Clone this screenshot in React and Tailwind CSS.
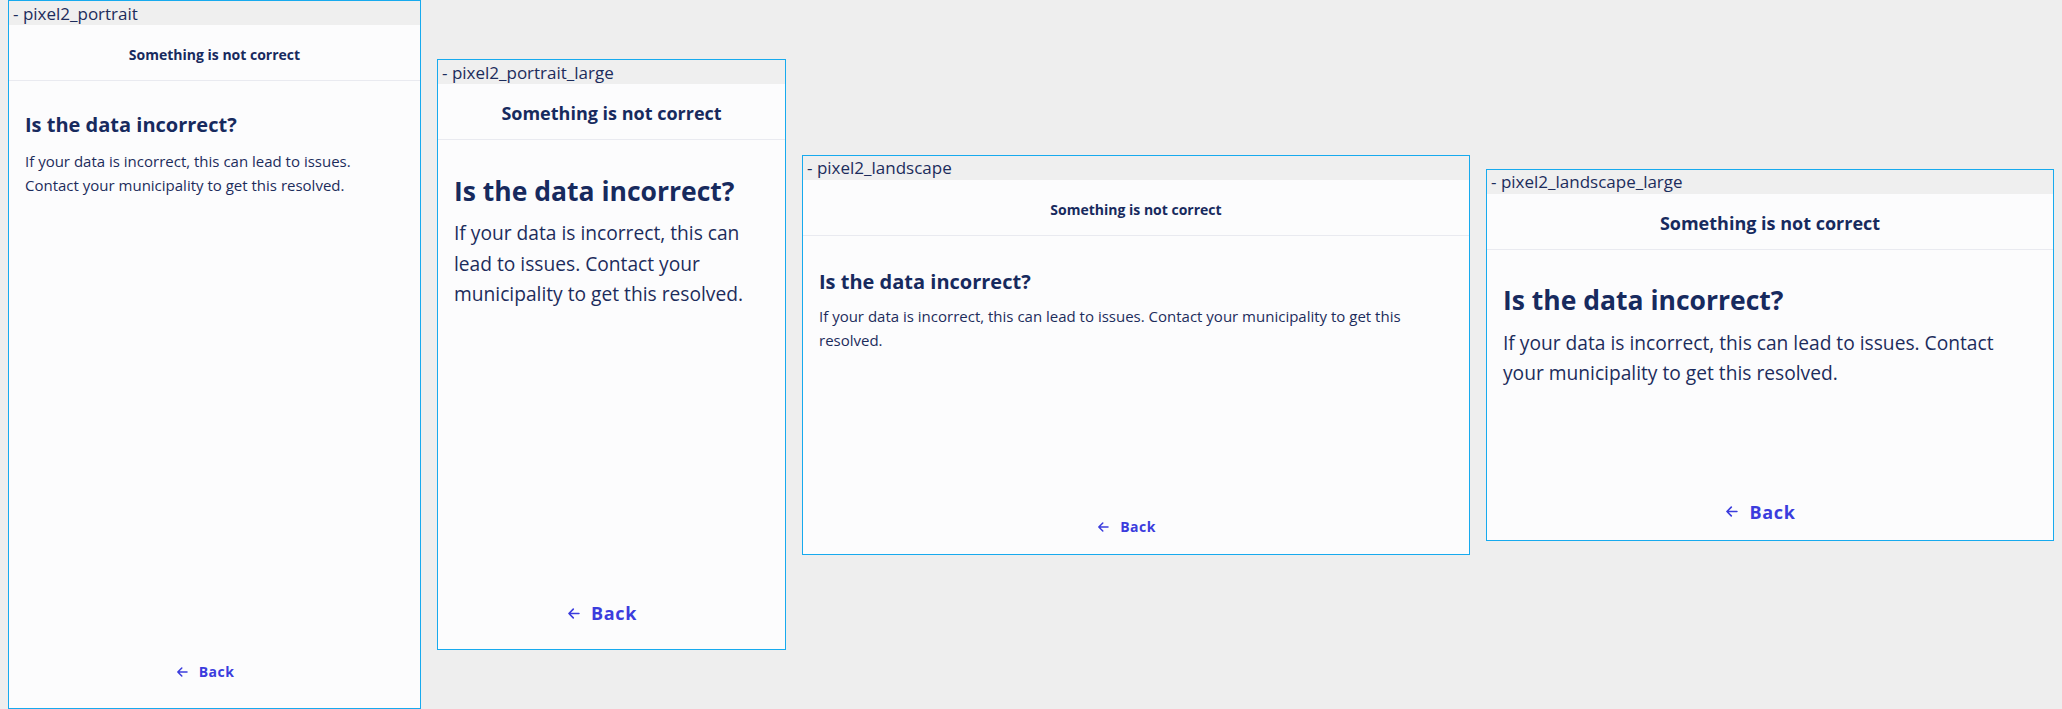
import React from 'react';

const frames = [
  {
    name: 'pixel2_portrait',
    box: 'w-[413px] h-[709px]',
    title: 'text-[14px]',
    content: 'pt-[30px] pb-[26px]',
    heading: 'text-[20px] leading-[28px]',
    body: 'mt-[10px] text-[15px] leading-[24px]',
    back: 'text-[14px] leading-[20px] tracking-[0.5px]',
    arrow: 'w-[12px] h-[12px]',
  },
  {
    name: 'pixel2_portrait_large',
    box: 'w-[349px] h-[591px]',
    title: 'text-[18px]',
    content: 'pt-[33px] pb-[24px]',
    heading: 'text-[26.5px] leading-[36px]',
    body: 'mt-[9px] text-[19.2px] leading-[30.5px]',
    back: 'text-[18px] leading-[24px] tracking-[0.7px]',
    arrow: 'w-[13px] h-[13px]',
  },
  {
    name: 'pixel2_landscape',
    box: 'w-[668px] h-[400px]',
    title: 'text-[14px]',
    content: 'pt-[32px] pb-[17px]',
    heading: 'text-[20px] leading-[28px]',
    body: 'mt-[8px] text-[15px] leading-[24px]',
    back: 'text-[14px] leading-[20px] tracking-[0.5px]',
    arrow: 'w-[12px] h-[12px]',
  },
  {
    name: 'pixel2_landscape_large',
    box: 'w-[568px] h-[372px]',
    title: 'text-[18px]',
    content: 'pt-[32px] pb-[16px]',
    heading: 'text-[26.5px] leading-[36px]',
    body: 'mt-[10px] pr-[6px] text-[19.2px] leading-[30px]',
    back: 'text-[18px] leading-[24px] tracking-[0.7px]',
    arrow: 'w-[13px] h-[13px]',
  },
];

function ArrowLeft({ className }) {
  return (
    <svg viewBox="0 0 12 12" fill="none" className={className}>
      <path d="M11 6H1.8M5.8 2L1.8 6l4 4" stroke="currentColor" strokeWidth="1.5" strokeLinecap="round" strokeLinejoin="round" />
    </svg>
  );
}

function DeviceFrame({ f }) {
  return (
    <div className={`${f.box} shrink-0 flex flex-col border border-[#17aaee] bg-[#fcfcfd]`}>
      {/* label van het device */}
      <div className="h-6 bg-[#efefef] px-[4px] flex items-center text-[17px] text-[#1c2c5c] leading-none">
        - {f.name}
      </div>
      <div className="h-[56px] border-b border-[#e9eaf0] flex items-center justify-center pt-1">
        <h1 className={`${f.title} font-bold text-[#172a5e]`}>Something is not correct</h1>
      </div>
      <div className={`flex-1 flex flex-col px-4 ${f.content}`}>
        <h2 className={`${f.heading} font-bold text-[#172a5e]`}>Is the data incorrect?</h2>
        <p className={`${f.body} text-[#1c2c5c]`}>
          If your data is incorrect, this can lead to issues. Contact your municipality to get this resolved.
        </p>
        <div className="mt-auto flex justify-center">
          <button className={`flex items-center gap-[11px] pr-[19px] font-bold text-[#3b3cdd] ${f.back}`}>
            <ArrowLeft className={f.arrow} />
            Back
          </button>
        </div>
      </div>
    </div>
  );
}

export default function App() {
  return (
    <div className="h-[709px] w-[2062px] bg-[#eeeeee] flex items-center gap-4 pl-2 font-['Open_Sans',sans-serif]">
      {frames.map((f) => (
        <DeviceFrame key={f.name} f={f} />
      ))}
    </div>
  );
}
